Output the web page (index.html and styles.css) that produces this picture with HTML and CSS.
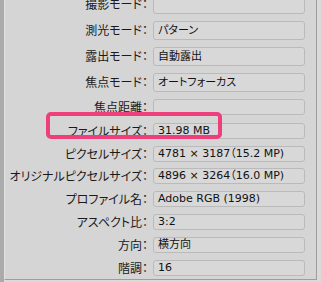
FILE: index.html
```html
<!DOCTYPE html>
<html lang="ja">
<head>
  <meta charset="UTF-8">
  <title>情報</title>
  <link rel="stylesheet" href="styles.css">
</head>
<body>
  <div class="edge"></div>
  <div class="panel">
    <div class="rows">
      <div class="row tall"><span class="label">撮影モード：</span><span class="field"></span></div>
      <div class="row tall"><span class="label">測光モード：</span><span class="field">パターン</span></div>
      <div class="row tall"><span class="label">露出モード：</span><span class="field">自動露出</span></div>
      <div class="row tall"><span class="label">焦点モード：</span><span class="field">オートフォーカス</span></div>
      <div class="row mid"><span class="label">焦点距離：</span><span class="field"></span></div>
      <div class="row"><span class="label">ファイルサイズ：</span><span class="field">31.98 MB</span></div>
      <div class="row"><span class="label">ピクセルサイズ：</span><span class="field">4781 × 3187（15.2 MP)</span></div>
      <div class="row tight"><span class="label">オリジナルピクセルサイズ：</span><span class="field">4896 × 3264（16.0 MP)</span></div>
      <div class="row"><span class="label">プロファイル名：</span><span class="field">Adobe RGB (1998)</span></div>
      <div class="row"><span class="label">アスペクト比：</span><span class="field">3:2</span></div>
      <div class="row"><span class="label">方向：</span><span class="field">横方向</span></div>
      <div class="row"><span class="label">階調：</span><span class="field">16</span></div>
    </div>
    <!-- highlight round the file size row -->
    <div class="mark"></div>
  </div>
</body>
</html>
```

FILE: styles.css
```css
* {
  box-sizing: border-box;
}
body {
  margin: 0;
  height: 282px;
  display: flex;
  background: #dadada;
  font-family: "Noto Sans CJK JP", sans-serif;
  font-feature-settings: "palt";
  color: #1a1a1a;
  overflow: hidden;
}

.edge {
  width: 4px;
  height: 100%;
  background: #ababab;
}
.panel {
  position: relative;
  width: 313px;
  height: 280px;
  background: #d5d5d5;
  border-right: 1px solid #9e9e9e;
  border-bottom: 1px solid #9e9e9e;
  border-left: 1px solid #e2e2e2;
  overflow: hidden;
}

.rows {
  margin-top: -9px;
}
.row {
  display: grid;
  grid-template-columns: 143px 152px;
  column-gap: 5px;
  align-items: center;
  height: 23px;
}
.row.tall {
  height: 26px;
}
.row.mid {
  height: 24px;
}
.row.tight {
  height: 22px;
}

.label {
  text-align: right;
  font-size: 12px;
  line-height: 1;
  white-space: nowrap;
}
.field {
  height: 16px;
  padding-left: 4px;
  border: 1px solid #bababa;
  border-radius: 3px;
  background: #d8d8d8;
  font-family: "DejaVu Sans", "Noto Sans CJK JP", sans-serif;
  font-size: 11px;
  line-height: 14px;
  white-space: nowrap;
  color: #111;
}
.tall .field {
  height: 19px;
  line-height: 17px;
}

.mark {
  position: absolute;
  left: 41px;
  top: 112px;
  width: 176px;
  height: 27px;
  border: 4.5px solid #ee3f7c;
  border-radius: 5px;
}
```
